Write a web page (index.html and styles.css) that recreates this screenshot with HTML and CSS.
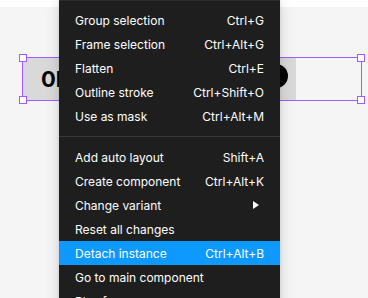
FILE: index.html
```html
<!DOCTYPE html>
<html lang="en">
<head>
    <meta charset="UTF-8">
    <title>Context menu</title>
    <link rel="stylesheet" href="styles.css">
</head>
<body>
    <div class="topbar"></div>
    <div class="canvas">
        <div class="frame">
            <div class="button">
                <span class="label">0h</span>
                <span class="dot"></span>
            </div>
            <span class="handle tl"></span>
            <span class="handle tr"></span>
            <span class="handle bl"></span>
            <span class="handle br"></span>
        </div>

        <div class="menu">
            <div class="item"><span>Group selection</span><span class="key">Ctrl+G</span></div>
            <div class="item"><span>Frame selection</span><span class="key">Ctrl+Alt+G</span></div>
            <div class="item"><span>Flatten</span><span class="key">Ctrl+E</span></div>
            <div class="item"><span>Outline stroke</span><span class="key">Ctrl+Shift+O</span></div>
            <div class="item"><span>Use as mask</span><span class="key">Ctrl+Alt+M</span></div>
            <div class="sep"></div>
            <div class="item"><span>Add auto layout</span><span class="key">Shift+A</span></div>
            <div class="item"><span>Create component</span><span class="key">Ctrl+Alt+K</span></div>
            <div class="item"><span>Change variant</span><span class="arrow"></span></div>
            <div class="item"><span>Reset all changes</span></div>
            <div class="item active"><span>Detach instance</span><span class="key">Ctrl+Alt+B</span></div>
            <div class="item"><span>Go to main component</span></div>
            <div class="item"><span>Play frame</span></div>
        </div>
    </div>
</body>
</html>
```

FILE: styles.css
```css
* {
    margin: 0;
    padding: 0;
    box-sizing: border-box;
}

body {
    font-family: Inter, "Noto Sans", sans-serif;
    background: #f5f5f5;
    width: 368px;
    height: 298px;
    overflow: hidden;
}

.topbar {
    height: 7px;
    background: #ffffff;
}

.canvas {
    position: relative;
    height: 291px;
}

/* selected instance on the canvas */
.frame {
    position: absolute;
    left: 22px;
    top: 50px;
    width: 340px;
    height: 44px;
    border: 1px solid #a15cff;
}

.button {
    width: 273px;
    height: 42px;
    background: #d9d9d9;
    display: flex;
    align-items: center;
    justify-content: space-between;
    padding: 0 8px 0 18px;
}

.label {
    font-size: 22px;
    font-weight: 700;
    color: #000;
}

.dot {
    width: 24px;
    height: 24px;
    border-radius: 50%;
    background: #000;
    margin-top: -6px;
}

.handle {
    position: absolute;
    width: 8px;
    height: 8px;
    background: #fff;
    border: 1px solid #a15cff;
}

.handle.tl { left: -4px; top: -4px; }
.handle.tr { right: -4px; top: -4px; }
.handle.bl { left: -4px; bottom: -4px; }
.handle.br { right: -4px; bottom: -4px; }

/* context menu */
.menu {
    position: absolute;
    left: 59px;
    top: -7px;
    width: 221px;
    background: #1e1e1e;
    border-top: 1px solid #2c2c2c;
    padding: 7px 0 8px;
    box-shadow: 0 2px 14px rgba(0, 0, 0, 0.15), 0 0 3px rgba(0, 0, 0, 0.1);
    color: #fff;
    font-size: 12px;
}

.item {
    height: 24px;
    display: flex;
    align-items: center;
    justify-content: space-between;
    padding: 0 16px;
}

.item.active {
    background: #0d99ff;
}

.sep {
    height: 1px;
    background: #383838;
    margin: 8px 0;
}

.arrow {
    width: 0;
    height: 0;
    border-top: 4px solid transparent;
    border-bottom: 4px solid transparent;
    border-left: 6px solid #fff;
    margin-right: 5px;
}
```
